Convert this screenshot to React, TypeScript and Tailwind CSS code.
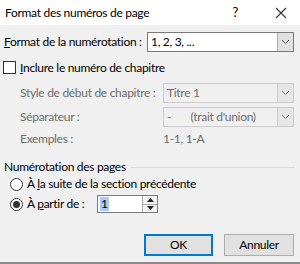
import React from "react";

const Chevron = ({ color = "#505050" }: { color?: string }) => (
  <svg width="9" height="6" viewBox="0 0 9 6">
    <path d="M1 1 L4.5 4.5 L8 1" fill="none" stroke={color} strokeWidth="1" />
  </svg>
);

const Select = ({
  value,
  disabled,
  className,
}: {
  value: React.ReactNode;
  disabled?: boolean;
  className: string;
}) => (
  <div
    className={`flex shrink-0 border ${
      disabled ? "border-[#cccccc] bg-[#f0f0f0] text-[#6d6d6d]" : "border-[#7a7a7a] bg-white text-black"
    } ${className}`}
  >
    <div className="flex-1 flex items-center pl-[3px] whitespace-pre">{value}</div>
    <div
      className={`w-[16px] flex items-center justify-center border-l ${
        disabled ? "border-[#cccccc] bg-[#e6e6e6]" : "border-[#adadad] bg-[#e1e1e1]"
      }`}
    >
      <Chevron color={disabled ? "#777" : "#505050"} />
    </div>
  </div>
);

const Radio = ({ checked }: { checked?: boolean }) => (
  <div className="w-[13px] h-[13px] shrink-0 rounded-full border border-[#333333] bg-white flex items-center justify-center">
    {checked && <div className="w-[7px] h-[7px] rounded-full bg-[#333333]" />}
  </div>
);

export default function App() {
  return (
    <div
      className="w-[300px] h-[264px] bg-[#f0f0f0] text-[12px] tracking-[-0.3px] text-black flex flex-col overflow-hidden whitespace-nowrap"
      style={{ fontFamily: 'Lato, "Noto Sans", sans-serif' }}
    >
      {/* Title bar */}
      <div className="h-[25px] bg-white flex items-center pl-[5px] shrink-0">
        <span className="text-[12px]">Format des numéros de page</span>
        <span className="ml-auto mr-[37px] text-[13px]">?</span>
        <svg width="12" height="12" viewBox="0 0 12 12" className="mr-[13px]">
          <path d="M1 1 L11 11 M11 1 L1 11" stroke="#333" strokeWidth="1.1" />
        </svg>
      </div>

      {/* Format row */}
      <div className="flex items-center mt-[7px] h-[20px] pl-[4px] pr-[6px]">
        <span>
          <span className="underline">F</span>ormat de la numérotation :
        </span>
        <Select value="1, 2, 3, ..." className="ml-auto w-[147px] h-[20px]" />
      </div>

      {/* Checkbox */}
      <div className="flex items-center mt-[9px] h-[13px] pl-[3px]">
        <div className="w-[13px] h-[13px] shrink-0 border border-[#333333] bg-white" />
        <span className="ml-[4px]">
          <span className="underline">I</span>nclure le numéro de chapitre
        </span>
      </div>

      {/* Style row */}
      <div className="flex items-center mt-[9px] h-[20px] pl-[20px] pr-[6px] text-[#6d6d6d]">
        <span>Style de début de chapitre :</span>
        <Select disabled value="Titre 1" className="ml-auto w-[131px] h-[20px]" />
      </div>

      {/* Separator row */}
      <div className="flex items-center mt-[4px] h-[20px] pl-[20px] pr-[6px] text-[#6d6d6d]">
        <span>Séparateur :</span>
        <Select disabled value={"-       (trait d'union)"} className="ml-auto w-[131px] h-[20px]" />
      </div>

      {/* Exemples */}
      <div className="flex items-center mt-[4px] h-[16px] pl-[20px] text-[#6d6d6d]">
        <span className="w-[143px]">Exemples :</span>
        <span>1-1, 1-A</span>
      </div>

      {/* Group header */}
      <div className="flex items-center mt-[12px] h-[16px] pl-[4px] pr-[5px]">
        <span>Numérotation des pages</span>
        <div className="flex-1 h-px bg-[#dcdcdc] ml-[5px]" />
      </div>

      {/* Radio 1 */}
      <div className="flex items-center mt-[1px] h-[16px] pl-[10px]">
        <Radio />
        <span className="ml-[4px]">
          À <span className="underline">l</span>a suite de la section précédente
        </span>
      </div>

      {/* Radio 2 */}
      <div className="flex items-center mt-[3px] h-[18px] pl-[10px]">
        <Radio checked />
        <span className="ml-[4px] w-[70px]">
          À <span className="underline">p</span>artir de :
        </span>
        <div className="flex h-[18px] w-[61px] border border-[#7a7a7a] bg-white">
          <div className="flex-1 flex items-center pl-[2px]">
            <span className="bg-[#a8cdf0] px-[1px] leading-[14px]">1</span>
          </div>
          <div className="w-[15px] flex flex-col border-l border-[#adadad]">
            <div className="flex-1 flex items-center justify-center border-b border-[#adadad] bg-[#f4f4f4]">
              <svg width="7" height="4" viewBox="0 0 7 4">
                <path d="M0 4 L3.5 0 L7 4 Z" fill="#222" />
              </svg>
            </div>
            <div className="flex-1 flex items-center justify-center bg-[#f4f4f4]">
              <svg width="7" height="4" viewBox="0 0 7 4">
                <path d="M0 0 L3.5 4 L7 0 Z" fill="#222" />
              </svg>
            </div>
          </div>
        </div>
      </div>

      {/* Buttons */}
      <div className="flex justify-end mt-[21px] pr-[6px] gap-[11px]">
        <div className="w-[69px] h-[22px] border-2 border-[#0078d7] bg-[#e1e1e1] flex items-center justify-center">
          OK
        </div>
        <div className="w-[70px] h-[22px] border border-[#adadad] bg-[#e1e1e1] flex items-center justify-center">
          Annuler
        </div>
      </div>

      <div className="mt-auto h-[2px] bg-[#8a8a8a]" />
    </div>
  );
}
